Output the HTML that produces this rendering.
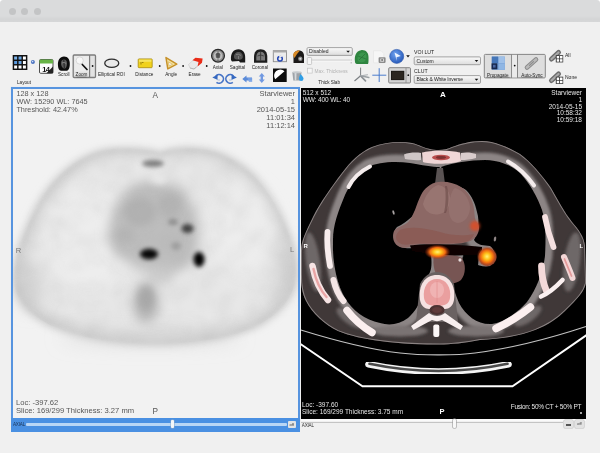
<!DOCTYPE html>
<html><head><meta charset="utf-8">
<style>
html,body{margin:0;padding:0;background:#fff;}
body{width:600px;height:453px;overflow:hidden;position:relative;font-family:"Liberation Sans",sans-serif;}
#win{position:absolute;left:0;top:0;width:600px;height:453px;background:#f0f0f0;border-radius:3.5px 3.5px 0 0;overflow:hidden;}
#title{position:absolute;left:0;top:0;width:600px;height:22px;background:linear-gradient(#dadbdc 0,#dadbdc 16px,#d4d5d6 19px,#d6d7d8 22px);}
.dot{position:absolute;top:8px;width:7.2px;height:7.2px;border-radius:50%;background:#c3c4c5;}
.abs{position:absolute;}
.lbl{position:absolute;font-size:5px;line-height:6px;color:#333;white-space:nowrap;transform:translateX(-50%);letter-spacing:-0.1px}
.ov{position:absolute;transform:translateZ(0);font-size:7.6px;line-height:8.15px;white-space:nowrap;letter-spacing:0}
#lv{position:absolute;left:11px;top:87px;width:285px;height:330px;border:2px solid #5794df;border-bottom:none;background:#efefef;overflow:hidden;box-shadow:0 0 1.5px .3px #a9cdf5}
#lbar{position:absolute;left:11px;top:418px;width:289px;height:13.5px;background:#4a90e2}
#rv{position:absolute;left:301px;top:88px;width:285px;height:330.5px;background:#000;overflow:hidden}
</style></head><body>
<div id="win">
<div id="title"><div class="dot" style="left:8.5px"></div><div class="dot" style="left:21px"></div><div class="dot" style="left:34px"></div></div>

<!--TOOLBAR-->
<svg id="tbs" class="abs" style="left:0;top:22px;transform:translateZ(0)" width="600" height="66" viewBox="0 22 600 66" font-family="Liberation Sans, sans-serif">
<defs>
<linearGradient id="cb" x1="0" y1="0" x2="0" y2="1"><stop offset="0" stop-color="#fafafa"/><stop offset="1" stop-color="#dcdcdc"/></linearGradient>
<radialGradient id="bl" cx=".4" cy=".35" r=".7"><stop offset="0" stop-color="#6ea0ee"/><stop offset="1" stop-color="#2457b8"/></radialGradient>
<filter id="t1" x="-20%" y="-20%" width="140%" height="140%"><feGaussianBlur stdDeviation="0.35"/></filter>
</defs>
<g font-size="4.65" fill="#1c1c1c" text-anchor="middle">

<!-- layout grid -->
<rect x="12.7" y="55" width="14.65" height="15" fill="#111"/>
<rect x="14.15" y="56.50" width="2.95" height="3.05" fill="#7db3ea"/><rect x="18.55" y="56.50" width="2.95" height="3.05" fill="#6aa5e3"/><rect x="22.95" y="56.50" width="2.95" height="3.05" fill="#fff"/><rect x="14.15" y="61.00" width="2.95" height="3.05" fill="#5b9be0"/><rect x="18.55" y="61.00" width="2.95" height="3.05" fill="#6aa5e3"/><rect x="22.95" y="61.00" width="2.95" height="3.05" fill="#fff"/><rect x="14.15" y="65.50" width="2.95" height="3.05" fill="#fff"/><rect x="18.55" y="65.50" width="2.95" height="3.05" fill="#fff"/><rect x="22.95" y="65.50" width="2.95" height="3.05" fill="#fff"/>
<text x="24" y="83.600">Layout</text>
<circle cx="32.900" cy="62" r="2" fill="#4a72c0"/><circle cx="32.600" cy="61.600" r=".8" fill="#cfe0fa"/>
<!-- calendar -->
<rect x="39.500" y="59.500" width="13.500" height="13.800" rx="1.200" fill="#fdfdfd" stroke="#3a3a3a" stroke-width=".9"/>
<path d="M39.500,63.500 L39.500,60.700 Q39.500,59.500 40.700,59.500 L51.800,59.500 Q53,59.500 53,60.700 L53,63.500 Z" fill="#67b346"/>
<path d="M46.500,73.300 L53,73.300 L53,66.500 Z" fill="#222"/>
<text x="45.800" y="71.600" font-size="7.500" font-weight="bold" fill="#111" letter-spacing="-.5">14</text>
<!-- scroll head -->
<path d="M58,66 C57.500,60 60,56.600 64,56.600 C68,56.600 70.200,60 69.800,65 C69.600,68 68.500,70.800 66.500,70.800 L61,70.800 C59,70.500 58.200,68.500 58,66 Z" fill="#0d0d0d"/>
<path d="M61,63 C61,60.500 62.500,59.500 64,59.500 C66,59.500 67.200,61 67,64 C66.800,66.500 66,68.500 64.500,68.500 C62.500,68.500 61,66 61,63 Z" fill="#5a5a5a"/>
<path d="M63.800,60 L64.300,68" stroke="#111" stroke-width=".8"/><path d="M62,63 Q64,61.500 66.200,63.500" stroke="#9a9a9a" stroke-width=".7" fill="none"/>
<text x="63.800" y="76.300">Scroll</text>
<!-- zoom button -->
<rect x="73.200" y="55" width="22.300" height="22.500" rx="1" fill="#e2e2e2" stroke="#7c7c7c" stroke-width="1.300"/>
<rect x="74.500" y="56.200" width="14.400" height="15.500" fill="#ececec"/>
<path d="M89.600,55 L89.600,77.500" stroke="#7c7c7c" stroke-width="1.200"/>
<circle cx="79.700" cy="60.500" r="3.600" fill="#f7f7f7" stroke="#d2d2d2" stroke-width=".8"/>
<path d="M82.300,64.500 L87,69.500" stroke="#111" stroke-width="1.700" stroke-linecap="round"/>
<text x="81.500" y="76.300">Zoom</text>
<path d="M76.500,77 L86.500,77" stroke="#444" stroke-width=".4"/>
<circle cx="92.600" cy="66" r=".9" fill="#111"/>
<!-- ellipse -->
<ellipse cx="111.750" cy="63.250" rx="7" ry="4.200" fill="#e9e9e9" stroke="#2d2d2d" stroke-width="1.300"/>
<text x="111.400" y="76.300">Elliptical ROI</text>
<circle cx="130.500" cy="66" r=".9" fill="#111"/>
<!-- distance -->
<rect x="138.200" y="58.900" width="14" height="8.800" rx=".8" fill="#f1d21c" stroke="#a88a10" stroke-width=".8"/>
<rect x="139" y="59.600" width="12.400" height="2.200" fill="#f8e873" opacity=".8"/>
<path d="M141,62 L141,64.500 M142,62.500 L143.500,62.500" stroke="#7a6408" stroke-width=".7"/>
<text x="144.300" y="76.300">Distance</text>
<circle cx="159.700" cy="66" r=".9" fill="#111"/>
<!-- angle -->
<path d="M166,57.600 L176.800,64.200 L167.800,68.900 Z" fill="#f3e3a0" stroke="#c6912a" stroke-width="1.500" stroke-linejoin="round"/>
<path d="M168.300,61.800 L172.500,64.300 L169,66.100 Z" fill="#f0f0f0" stroke="#d8ab40" stroke-width=".6"/>
<text x="171.200" y="76.300">Angle</text>
<circle cx="183.100" cy="66" r=".9" fill="#111"/>
<!-- erase -->
<path d="M188.500,64.500 L195,58.500 L202,59.500 L201,63.500 L194,69 L190,68 Z" fill="#e9e9e9" stroke="#c4c4c4" stroke-width=".5"/>
<path d="M192.500,60.300 L195.500,57.800 L202.600,58.400 L202,62.800 L197.500,66.500 L198.500,62 Z" fill="#ea2c18"/>
<path d="M190,68 L194,69 L196.500,67" fill="none" stroke="#999" stroke-width=".6"/>
<text x="194.600" y="76.300">Erase</text>
<circle cx="206.700" cy="66" r=".9" fill="#111"/>
<!-- axial -->
<circle cx="218" cy="55.700" r="6.400" fill="#8f8f8f" stroke="#2a2a2a" stroke-width="1.300"/>
<circle cx="218" cy="55.700" r="4.300" fill="#bdbdbd"/>
<path d="M218,50.500 L218,61 M216,54 Q218,52 220,54 L219.500,57.500 L216.500,57.500 Z" fill="#555" stroke="#444" stroke-width=".6"/>
<text x="217.800" y="68.900">Axial</text>
<!-- sagittal -->
<path d="M231,60 C230.500,53 233.500,49.300 238.500,49.300 C243,49.300 245.500,53 245.200,58 L245.200,62.500 L240,62.500 L239,61 L232,61.500 Z" fill="#1a1a1a"/>
<path d="M234,57 C234,53.500 236,52 238.500,52 C241,52 243,54 242.800,57 C242.500,59.500 240.500,60 238,59.500 C235.500,59.500 234,59 234,57 Z" fill="#555"/>
<path d="M236,54.500 Q238.500,53.500 241,55.500 M238.500,56 L238.500,59" stroke="#999" stroke-width=".6" fill="none"/>
<text x="237.500" y="68.900">Sagittal</text>
<!-- coronal -->
<path d="M254,62.700 L254,57 C254,52 256.500,49.300 260.600,49.300 C264.700,49.300 267.300,52 267.300,57 L267.300,62.700 Z" fill="#1e1e1e"/>
<path d="M256.300,60.500 L256.300,57 C256.300,53.500 258,51.800 260.600,51.800 C263.200,51.800 265,53.500 265,57 L265,60.500 Z" fill="#7a7a7a"/>
<path d="M260.600,51.800 L260.600,60.500 M257.500,56 Q260.600,54 263.800,56" stroke="#2a2a2a" stroke-width=".7" fill="none"/>
<text x="259.900" y="68.900">Coronal</text>
<!-- rotate ccw -->
<g fill="none" stroke="#4573c6" stroke-width="1.700">
<path d="M215.800,76.200 A4.300,4.300 0 1 1 216.500,82.300"/>
<path d="M236,76.200 A4.300,4.300 0 1 0 235.300,82.300" transform="translate(-2.500,0)"/>
</g>
<path d="M212.300,77.500 L217.800,74.500 L217.300,79.800 Z" fill="#3568c0"/>
<path d="M236.900,77.500 L231.400,74.500 L231.900,79.800 Z" fill="#3568c0"/>
<path d="M217.500,77 L217.500,80 L220,80" stroke="#7d9ad0" stroke-width=".6" fill="none"/>
<path d="M231.500,77 L231.500,80 L229,80" stroke="#7d9ad0" stroke-width=".6" fill="none"/>
<!-- flip h -->
<path d="M242.300,79 L246.500,75.500 L246.500,77.400 L252,77.400 L252,80.600 L246.500,80.600 L246.500,82.500 Z" fill="#4a7fd6" opacity=".9"/>
<path d="M247.500,78 L252.200,78 L252.200,82 L249,82 Z" fill="#7aa4e6" opacity=".8"/>
<!-- flip v -->
<path d="M261.800,73 L264.800,76.500 L263,76.500 L263,79.500 L264.800,79.500 L261.800,83 L258.800,79.500 L260.600,79.500 L260.600,76.500 L258.800,76.500 Z" fill="#5a8ade" opacity=".85"/>
<!-- screenshot -->
<rect x="273.300" y="50.700" width="13.200" height="11" fill="#ececec" stroke="#8c8c8c" stroke-width=".9"/>
<rect x="273.300" y="50.700" width="13.200" height="1.800" fill="#a9a9a9"/>
<circle cx="280" cy="58.800" r="2.300" fill="none" stroke="#2446b4" stroke-width="1.500"/>
<path d="M279,55 L282.500,56.500 L279.500,58 Z" fill="#ececec"/>
<!-- invert -->
<rect x="273" y="68.500" width="13.700" height="13.500" fill="#0c0c0c"/>
<path d="M275.200,79.300 A6.200,6.200 0 0 1 284.500,71.200 Z" fill="#fff"/>
<!-- person -->
<path d="M293.500,63 L293.500,56 C293.500,52 296,50.400 299,50.400 C302,50.400 304,52.500 304,56 L304,63 Z" fill="#1c1a19"/>
<path d="M293,55 C293.500,51.500 297,50 300,50.600 L297,54 L294.500,58 Z" fill="#d98a25"/>
<circle cx="300.300" cy="58.800" r="2.200" fill="#8a8a8a"/><circle cx="300.300" cy="58.800" r="1" fill="#ddd"/>
<!-- bucket -->
<path d="M292.300,72.300 L301.500,72.300 L300.500,80.500 L293.300,80.500 Z" fill="#9ea3a8"/>
<path d="M294.500,72.300 L296.500,72.300 L296.300,80.500 L294.800,80.500 Z" fill="#d6d9dc"/>
<ellipse cx="296.900" cy="72.300" rx="4.600" ry="1" fill="#c6cacd"/>
<path d="M300.500,74 C302.500,76 303.500,77.500 303.500,78.800 A2.300,2.300 0 0 1 298.900,78.800 C298.900,77.500 299.500,76 300.500,74 Z" fill="#2f9ee6"/>
<!-- Disabled combo -->
<rect x="307" y="47.600" width="45.300" height="7.800" rx="1.200" fill="url(#cb)" stroke="#8f8f8f" stroke-width=".8"/>
<text x="309" y="53.300" text-anchor="start" font-size="5" fill="#222">Disabled</text>
<path d="M346.300,50.700 L349.900,50.700 L348.100,52.800 Z" fill="#111"/>
<!-- slider -->
<path d="M311,60.200 L350,60.200" stroke="#cfcfcf" stroke-width="1.200"/>
<path d="M311,61.200 L350,61.200" stroke="#fafafa" stroke-width=".8"/>
<rect x="307.300" y="57.500" width="4.300" height="7" rx=".8" fill="#f6f6f6" stroke="#b9b9b9" stroke-width=".7"/>
<path d="M351.200,59.500 L351.200,60.500 M351.200,62 L351.200,63.500" stroke="#999" stroke-width=".7"/>
<!-- checkbox -->
<rect x="307.400" y="68.200" width="4.800" height="4.900" fill="#f7f7f7" stroke="#c3c3c3" stroke-width=".7"/>
<text x="314.500" y="72.500" text-anchor="start" font-size="4.800" fill="#b3b3b3">Max. Thickness</text>
<text x="329.200" y="83.800">Thick Slab</text>
<!-- green head -->
<path d="M355,62 C354,56 356,51 361,50.200 C365.500,49.600 368.500,52.500 368.500,57 C368.500,60 368.700,62.500 368,64 L357,64 C355.500,63.800 355.200,63 355,62 Z" fill="#2f8540"/>
<path d="M357.500,58 C358,54.500 360,52.500 363,52.500 C365.500,52.500 366.800,55 366.500,58 C366,61 364,62.500 361,62.300 C358.500,62 357.300,60.500 357.500,58 Z" fill="#3f9a50" opacity=".8"/>
<path d="M358,56 L366,59 M359,60 L365,54" stroke="#246a32" stroke-width=".6"/>
<!-- camera doc -->
<path d="M373.500,50.700 L381,50.700 L383.800,53.500 L383.800,62.800 L373.500,62.800 Z" fill="#f6f6f6" stroke="#e0e0e0" stroke-width=".5"/>
<rect x="378.600" y="57.200" width="7" height="5.700" rx=".8" fill="#8c8c8c"/>
<rect x="380.200" y="58.400" width="3.800" height="3.400" rx=".5" fill="#d9d9d9"/><circle cx="382.100" cy="60.100" r="1" fill="#777"/>
<!-- blue circle -->
<circle cx="396.700" cy="56.400" r="7" fill="url(#bl)" stroke="#2a55aa" stroke-width=".6"/>
<path d="M394.500,52.500 L400.800,56 L396.500,57.200 L396.800,61 Z" fill="#f0f5ff"/>
<path d="M406.200,55.200 L409.800,55.200 L408,57.500 Z" fill="#111"/>
<!-- axes -->
<g stroke="#7c8084" stroke-linecap="round" fill="none">
<path d="M360.600,68 L360.600,75.800" stroke-width="1"/>
<path d="M360.600,75.800 L354.800,80.700" stroke-width="1.200"/>
<path d="M360.600,75.800 L368.800,77.500" stroke-width="1.500" stroke="#9aa0a4"/>
<path d="M360.600,75.800 L365.500,80.800" stroke-width="1.700" stroke="#8d9296"/>
<path d="M360.600,75.800 L367.500,74.800" stroke-width="1" stroke="#a5aaae"/>
</g>
<!-- crosshair -->
<path d="M379.200,68.200 L379.200,82 M372.300,75.200 L386.300,75.200" stroke="#3a6fc9" stroke-width=".9"/>
<!-- monitor -->
<rect x="388.700" y="67.700" width="21.800" height="15.300" rx="1" fill="#d4d4d4" stroke="#7a7a7a" stroke-width=".9"/>
<rect x="391" y="70.800" width="13.300" height="9.300" fill="#1a1815"/>
<rect x="391.800" y="71.600" width="11.700" height="7.700" fill="#2b2620"/>
<path d="M406,67.700 L406,83" stroke="#8a8a8a" stroke-width=".8"/>
<circle cx="408.300" cy="75.200" r=".9" fill="#111"/>
<!-- VOI LUT -->
<text x="414" y="53.600" text-anchor="start" font-size="5.200" fill="#222">VOI LUT</text>
<rect x="414.200" y="56.900" width="66.300" height="7.800" rx="1.200" fill="url(#cb)" stroke="#8f8f8f" stroke-width=".8"/>
<text x="416.500" y="62.600" text-anchor="start" font-size="5" fill="#222">Custom</text>
<path d="M474.700,60 L478.300,60 L476.500,62.100 Z" fill="#111"/>
<text x="414" y="72.600" text-anchor="start" font-size="5.200" fill="#222">CLUT</text>
<rect x="414.200" y="75.600" width="66.300" height="7.800" rx="1.200" fill="url(#cb)" stroke="#8f8f8f" stroke-width=".8"/>
<text x="416.500" y="81.300" text-anchor="start" font-size="5" fill="#222" letter-spacing="-.12">Black &amp; White Inverse</text>
<path d="M474.700,78.700 L478.300,78.700 L476.500,80.800 Z" fill="#111"/>
<!-- propagate -->
<rect x="484.300" y="54.400" width="61" height="23.500" rx="1" fill="#dedede" stroke="#868686" stroke-width="1"/>
<path d="M511.600,54.400 L511.600,77.900 M517.500,54.400 L517.500,77.900" stroke="#868686" stroke-width="1"/>
<rect x="512.100" y="54.900" width="4.900" height="22.500" fill="#ebebeb"/>
<rect x="491.800" y="56.600" width="13" height="13.200" fill="#6b96cc"/>
<rect x="491.800" y="56.600" width="6.300" height="6.400" fill="#4576b8"/><rect x="498.500" y="63.300" width="6.300" height="6.500" fill="#8fb6e4"/>
<rect x="498.500" y="56.600" width="6.300" height="6.400" fill="#9fc0e8"/>
<rect x="491.500" y="63.300" width="5.800" height="6" fill="#16284e"/><rect x="493" y="64.800" width="2.600" height="2.800" fill="#4a66a0"/>
<text x="497.800" y="76.900">Propagate</text>
<path d="M486.500,77.300 L509.500,77.300" stroke="#444" stroke-width=".4"/>
<circle cx="514.700" cy="65.600" r=".9" fill="#111"/>
<!-- auto-sync -->
<g stroke-linecap="round" fill="none">
<path d="M527,67.500 L536,59.500" stroke="#8a8a8a" stroke-width="4.600"/>
<path d="M527,67.500 L536,59.500" stroke="#b9b9b9" stroke-width="2.600"/>
<path d="M529.500,65.300 L533.500,61.700" stroke="#8a8a8a" stroke-width="1.100"/>
</g>
<text x="532" y="76.900">Auto-Sync</text>
<path d="M521.500,77.300 L542.500,77.300" stroke="#444" stroke-width=".4"/>
<!-- all -->
<g id="chain">
<path d="M551.500,59 L558.500,52.500" stroke="#6c6c6c" stroke-width="5" stroke-linecap="round" fill="none"/>
<path d="M551.500,59 L558.500,52.500" stroke="#a9a9a9" stroke-width="2.200" stroke-linecap="round" fill="none"/>
<rect x="555.800" y="55.200" width="7.400" height="7.200" fill="#333"/>
<rect x="556.700" y="56" width="2.500" height="2.500" fill="#fff"/><rect x="560" y="56" width="2.500" height="2.500" fill="#fff"/>
<rect x="556.700" y="59.200" width="2.500" height="2.500" fill="#fff"/><rect x="560" y="59.200" width="2.500" height="2.500" fill="#fff"/>
</g>
<text x="565" y="57.200" text-anchor="start" font-size="5">All</text>
<use href="#chain" y="21.500"/>
<text x="565" y="78.800" text-anchor="start" font-size="5">None</text>

</g>
</svg>

<!--LEFT VIEWER-->
<div id="lv">
<svg class="abs" style="left:0;top:0" width="285" height="330" viewBox="13 89 285 330">
<defs>
<filter id="b2" x="-50%" y="-50%" width="200%" height="200%"><feGaussianBlur stdDeviation="2.2"/></filter>
<filter id="b3" x="-50%" y="-50%" width="200%" height="200%"><feGaussianBlur stdDeviation="3.5"/></filter>
<filter id="b5" x="-50%" y="-50%" width="200%" height="200%"><feGaussianBlur stdDeviation="6"/></filter>
<filter id="b8" x="-50%" y="-50%" width="200%" height="200%"><feGaussianBlur stdDeviation="9"/></filter>
<filter id="nz" x="0" y="0" width="100%" height="100%"><feTurbulence type="fractalNoise" baseFrequency="0.06" numOctaves="2" seed="7" result="t"/><feColorMatrix in="t" type="matrix" values="0 0 0 0 0.4  0 0 0 0 0.4  0 0 0 0 0.4  1.5 0 0 0 -0.6"/><feGaussianBlur stdDeviation="1.5"/></filter>
<clipPath id="petclip"><path d="M160,153 C150,149 125,147 105,150 C75,156 50,180 37,207 C24,232 14,255 14,278 C14,299 27,313 52,326 C85,340 120,344 155,344 C195,344 235,338 260,324 C283,311 296,294 296,272 C296,248 286,221 270,196 C256,174 234,156 208,150 C190,147 172,148 160,153 Z"/></clipPath>
<filter id="b1" x="-50%" y="-50%" width="200%" height="200%"><feGaussianBlur stdDeviation="1.2"/></filter>
</defs>
<rect x="0" y="80" width="310" height="350" fill="#f2f2f2"/>
<!-- body -->
<g filter="url(#b3)">
<path id="petbody" d="M160,151 C150,147 125,145 105,148 C75,154 50,178 35,205 C22,230 12,255 12,278 C12,300 25,315 50,328 C85,342 120,346 155,346 C195,346 235,340 262,326 C285,312 298,295 298,272 C298,248 288,220 272,195 C258,172 235,154 208,148 C190,145 172,146 160,151 Z" fill="#d3d3d3"/>
</g>
<g filter="url(#b5)">
<path d="M160,160 C150,156 125,155 108,158 C80,164 60,184 46,210 C34,232 26,255 26,275 C26,294 36,306 58,317 C90,330 122,334 155,334 C192,334 228,329 252,316 C273,304 284,290 284,270 C284,248 276,224 262,201 C249,180 230,164 205,158 C190,155 172,156 160,160 Z" fill="#e7e7e7"/>
</g>
<g filter="url(#b2)"><path d="M160,155 C150,151 125,149 106,152 C77,158 53,181 39,208 C26,232 17,256 17,278 C17,298 29,311 53,324 C86,338 120,342 155,342 C195,342 234,336 259,322 C281,309 294,293 294,272 C294,248 284,222 268,197 C254,175 233,158 207,152 C190,149 172,150 160,155 Z" fill="none" stroke="#c9c9c9" stroke-width="3.500" opacity=".55"/></g>
<!-- lungs lighter -->
<g filter="url(#b8)">
<ellipse cx="88" cy="238" rx="42" ry="52" fill="#eeeeee" opacity=".85"/>
<ellipse cx="243" cy="232" rx="30" ry="48" fill="#eeeeee" opacity=".85"/>
<ellipse cx="30" cy="285" rx="10" ry="25" fill="#c8c8c8" opacity=".7"/>
<ellipse cx="283" cy="270" rx="9" ry="28" fill="#cccccc" opacity=".7"/>
<ellipse cx="150" cy="338" rx="90" ry="7" fill="#d0d0d0" opacity=".6"/>
</g>
<!-- mediastinum -->
<g filter="url(#b5)">
<path d="M132,186 C150,176 180,180 189,198 C197,215 201,235 197,255 C190,270 172,276 152,270 C130,266 108,255 108,238 C108,215 118,196 132,186Z" fill="#bdbdbd"/>
<ellipse cx="146" cy="303" rx="13" ry="20" fill="#b6b6b6"/>
<ellipse cx="160" cy="275" rx="14" ry="10" fill="#cdcdcd"/>
</g>
<g filter="url(#b3)">
<ellipse cx="140" cy="212" rx="16" ry="14" fill="#a8a8a8" opacity=".55"/>
<ellipse cx="170" cy="205" rx="12" ry="12" fill="#acacac" opacity=".5"/>
<ellipse cx="125" cy="235" rx="10" ry="8" fill="#b0b0b0" opacity=".5"/>
<ellipse cx="146" cy="298" rx="8" ry="12" fill="#a2a2a2" opacity=".7"/>
<ellipse cx="159" cy="179" rx="8" ry="5" fill="#f4f4f4" opacity=".95"/>
</g>
<g filter="url(#b2)">
<ellipse cx="153" cy="163.500" rx="11" ry="3.500" fill="#7e7e7e"/>
<ellipse cx="149" cy="254" rx="9" ry="5.200" fill="#000"/>
<ellipse cx="199" cy="259.500" rx="5.500" ry="7.500" fill="#050505"/>
<ellipse cx="187.500" cy="228.500" rx="6" ry="4.500" fill="#3c3c3c"/>
<ellipse cx="173" cy="222" rx="5" ry="3" fill="#8a8a8a"/>
<ellipse cx="176" cy="246" rx="5" ry="4" fill="#909090" opacity=".7"/>
</g>
<g clip-path="url(#petclip)" opacity=".22" filter="url(#b2)"><rect x="13" y="140" width="285" height="210" filter="url(#nz)"/></g>
</svg>
</div>
<div id="lbar"></div>

<!--RIGHT VIEWER-->
<div id="rv">
<svg class="abs" style="left:0;top:0" width="285" height="330.5" viewBox="301 88 285 330.5">
<defs>
<filter id="c1" x="-20%" y="-20%" width="140%" height="140%"><feGaussianBlur stdDeviation="0.7"/></filter>
<filter id="c2" x="-50%" y="-50%" width="200%" height="200%"><feGaussianBlur stdDeviation="1.6"/></filter>
<filter id="c3" x="-50%" y="-50%" width="200%" height="200%"><feGaussianBlur stdDeviation="3"/></filter>
<radialGradient id="hot"><stop offset="0" stop-color="#fff27a"/><stop offset=".3" stop-color="#ffc21a"/><stop offset=".6" stop-color="#f06a10"/><stop offset="1" stop-color="#a02a10" stop-opacity="0"/></radialGradient>
</defs>
<rect x="300" y="80" width="300" height="345" fill="#000"/>
<!-- body wall -->
<defs>
<path id="outer" d="M301,252 C301,240 306,232 313,217 C320,203 332,186 342,173 C350,162 360,152 372,147 C385,142 400,141 412,143 C420,145 424,148 430,149 C436,150.5 446,150.5 452,147 C460,144 470,141 482,141 C494,141 508,147 520,154 C530,161 542,175 551,188 C558,200 564,212 572,222 C578,229 584,236 585,246 L586,283 C584,292 578,298 565,311 C558,318 548,325 535,330 C520,336 500,339 480,340 C465,343 450,344.5 440,344.5 C425,344.5 400,344 380,341 C365,339 350,336 338,331 C325,325 312,313 306,301 C302,293 301,285 301,275 Z"/>
<path id="lungL" d="M333,240 C333,225 338,212 345,195 C350,184 358,173 368,167 C378,162 395,161 410,163 C422,165 432,167 440,167 C436,172 437,180 436,184 C428,187 424,193 421,203 C417,213 408,222 397,227 C392,232 393,241 400,247 C410,250 420,246 430,250 C432,258 432,268 430,272 C426,280 424,287 422,294 C420,303 416,311 408,318 C400,324 390,326 380,323 C365,320 352,310 345,298 C338,286 332,265 333,240 Z"/>
<path id="lungR" d="M441,167 C452,163 470,160 485,160 C498,160 512,165 521,174 C530,184 538,198 542,210 C546,222 546,240 545,256 C543,272 537,288 527,302 C518,312 505,322 492,324 C478,325 466,316 459,303 C455,294 452,284 451,274 C458,268 462,262 463,256 C470,262 480,268 490,266 C496,260 496,250 490,246 C484,245 478,246 474,240 C478,232 480,222 477,212 C475,203 472,196 466,190 C460,186 452,184 444,184 C445,178 445,172 441,167 Z"/>
<clipPath id="bodyclip"><use href="#outer"/></clipPath>
</defs>
<g filter="url(#c1)">
<use href="#outer" fill="#3f3838"/>
<g clip-path="url(#bodyclip)">
<g filter="url(#c2)" fill="none" stroke="#8c8585" stroke-width="15" stroke-linejoin="round">
<use href="#lungL"/><use href="#lungR"/>
</g>
<g filter="url(#c2)">
<ellipse cx="313" cy="262" rx="7" ry="30" fill="#6e6767" transform="rotate(-8 313 262)"/>
<ellipse cx="572" cy="262" rx="8" ry="30" fill="#6e6767" transform="rotate(8 572 262)"/>
<ellipse cx="400" cy="331" rx="28" ry="5.500" fill="#7a7373"/>
<ellipse cx="476" cy="331" rx="28" ry="5.500" fill="#7a7373"/>
<ellipse cx="350" cy="318" rx="16" ry="6" fill="#6e6767" transform="rotate(35 350 318)"/>
<ellipse cx="528" cy="316" rx="16" ry="6" fill="#6e6767" transform="rotate(-35 528 316)"/>
</g>
<use href="#outer" fill="none" stroke="#8a8282" stroke-width="1.800"/>
</g>
<use href="#lungL" fill="#000"/><use href="#lungR" fill="#000"/>
<path d="M436,168 L446,168 L445,186 L436,186 Z" fill="#000"/>
</g>
<!-- heart -->
<g filter="url(#c1)">
<path d="M437,168 L443,168 L445,184 L435,184 Z" fill="#5a5252"/>
<path fill="#8c6865" d="M438.5,182 C446,181 455,183 461,187 C467,191 471,197 473,204 C475,211 474,217 476,221 C479,224 480,228 478,233 C476,238 472,241 467,242 C460,244 452,244 445,244.5 C435,245 424,244 415,245 C410,248 402,249 398,246 C393,243 392,236 394,231 C397,227 403,226 407,223 C411,220 413,214 415,210 C417,204 419,199 421,195 C424,189 430,183 438.5,182 Z"/>
<path fill="#9b7874" opacity=".8" d="M438,185 C430,188 425,196 423,204 C425,212 432,216 440,214 C447,212 451,205 450,197 C449,190 444,186 438,185Z"/>
<path fill="#967370" opacity=".8" d="M455,188 C463,190 469,198 470,207 C470,216 465,223 457,223 C451,222 448,215 449,206 C450,198 451,191 455,188Z"/>
<path fill="#8a5750" opacity=".7" d="M400,230 C410,226 425,228 440,232 C452,236 465,236 474,234 C472,241 465,243 455,243 C440,244 420,243 410,244 C403,246 397,243 396,238 C396,234 398,232 400,230Z"/>
<path fill="#6a4a48" opacity=".6" d="M447,186 C449,195 449,205 446,213 L444,213 C446,204 446,195 445,186Z"/>
<path fill="#775553" d="M434,255 C440,253 455,254 462,258 C466,264 466,274 461,280 C455,285 446,284 441,280 C435,276 432,265 434,255Z"/>
<ellipse cx="460" cy="260" rx="1.6" ry="1.8" fill="#e8dede"/>
<ellipse cx="393.5" cy="212.5" rx="1" ry="2.4" fill="#a9a3a3" transform="rotate(-15 393.5 212.5)"/>
<ellipse cx="495" cy="239" rx="1.2" ry="2.6" fill="#8f8585" transform="rotate(10 495 239)"/>
</g>
<!-- bronchus gap -->
<path d="M463,254 L479,254 L478,266 C472,270 466,266 464,262 Z" fill="#050202" filter="url(#c1)"/>
<path d="M410,245.5 C425,243.5 450,244 482,247 L482,254 C460,257 430,255 412,251 Z" fill="#0a0404" filter="url(#c1)"/>
<!-- vertebra -->
<g filter="url(#c1)">
<path d="M420,284 C424,276 430,272 437,272 C444,272 450,276 454,284 L458,322 L416,322 Z" fill="#6a6262"/>
<path d="M411,326 L429,313 C434,317 440,317 445,313 L463,326 L460.500,330 L442,320 C439,321.500 435,321.500 432,320 L413.500,330 Z" fill="#f8efef"/>
<path d="M420,300 C418,285 425,275 437,275 C449,275 456,285 454,300 C453,306 449,309 445,309 L429,309 C425,309 421,306 420,300 Z" fill="#f6e2e2"/>
<path d="M424,298 C422.500,287 428,279 437,279 C446,279 451.500,287 450,298 C449,304 445,306 437,306 C429,306 425,304 424,298 Z" fill="#ea9f9f"/>
<ellipse cx="437" cy="290" rx="7" ry="8" fill="#f2bcbc" opacity=".7"/>
<path d="M437,281 L437,303" stroke="#e08a8a" stroke-width="1" opacity=".6"/>
<ellipse cx="437" cy="310" rx="7.500" ry="5" fill="#4c3030"/>
<ellipse cx="437" cy="310" rx="5" ry="3" fill="#5e3a3a"/>
<rect x="433.300" y="324.500" width="6" height="12.500" rx="2" fill="#fcf7f7"/>
</g>
<!-- sternum -->
<g filter="url(#c1)">
<path d="M404,154.5 C409,152.5 416,152 421,153 L421,160 C416,160.5 410,160 405,159 Z" fill="#cfc6c6"/>
<path d="M422,152.5 C430,150 452,150 460,152.5 L461,161 C452,164.5 430,164.5 423,162 Z" fill="#efd6d6"/>
<ellipse cx="441" cy="157.5" rx="9" ry="2.8" fill="#b94e4e"/>
<ellipse cx="441" cy="157.5" rx="5" ry="1.4" fill="#7a3030"/>
<path d="M461,153 C466,152 472,152.5 476,154 L476,158 C471,159.5 466,160 461,160 Z" fill="#d9cdcd"/>
</g>
<!-- ribs -->
<g filter="url(#c1)" fill="none" stroke-linecap="round">
<path d="M348.5,187 C353,178 361,171 370,166.5" stroke="#f4ecec" stroke-width="4"/>
<path d="M327.5,232 C326.5,245 328,255 330,266" stroke="#f8eded" stroke-width="5.800"/>
<path d="M312.5,266 C315,280 321,292 328,300" stroke="#f6e4e4" stroke-width="6.500"/>
<path d="M313.5,269 C316,281 321,291 326.5,297" stroke="#e9a5a5" stroke-width="2.4"/>
<path d="M333.5,280 C335.5,289 339,296 343.5,301" stroke="#f5e6e6" stroke-width="6"/>
<path d="M347,310.5 C354,319.5 363,327 372,332.5" stroke="#fbefef" stroke-width="7.500"/>
<path d="M508,161.5 C518,167 527,175.5 534,185.500" stroke="#f4ecec" stroke-width="4"/>
<path d="M545,217 C547,228 550,238 553.5,247" stroke="#f5e0e0" stroke-width="5.800"/>
<path d="M541.5,266 C541.5,276 543.5,284 546.5,291" stroke="#f4dada" stroke-width="6.800"/>
<path d="M564,257 C567,264 570,271 572.5,278" stroke="#f3d6d6" stroke-width="6"/>
<path d="M564.5,259 C567,265 569.5,271 571.5,276" stroke="#e39a9a" stroke-width="1.8"/>
<path d="M541,296.500 C549,293 556,287 562.5,280" stroke="#faf0f0" stroke-width="4.600"/>
<path d="M496,328.5 C508,323 520,315.500 530.5,307" stroke="#fbefef" stroke-width="7.500"/>
</g>
<circle cx="487.5" cy="257" r="9" fill="#8a4a3c" filter="url(#c1)"/>
<!-- hot spots -->
<ellipse cx="437.5" cy="252" rx="13" ry="7.5" fill="url(#hot)"/>
<circle cx="487" cy="256.5" r="10.5" fill="url(#hot)"/>
<circle cx="475" cy="226" r="5" fill="#e8481a" opacity=".75" filter="url(#c2)"/>
<!-- table -->
<path d="M300,329.700 C330,339 365,349 400,353 C420,355.300 455,355.800 475,353 C510,348.500 545,340 586,326.500" fill="none" stroke="#c2c2c2" stroke-width="1.100" filter="url(#c1)"/>
<path d="M299,343.100 L362.500,386.250 L512.500,386.250 L587,334.800" fill="none" stroke="#fff" stroke-width="1.900" stroke-linejoin="miter"/>
<g filter="url(#c1)">
<path d="M368.500,364.300 Q438.500,379 508.500,364.300" fill="none" stroke="#f4f4f4" stroke-width="6.600" stroke-linecap="round"/>
<path d="M369.500,363.800 Q438.500,378.300 507.500,363.800" fill="none" stroke="#4a4a4a" stroke-width="2.600" stroke-linecap="round"/>
</g>
</svg>
</div>



<!--SLIDERS-->
<div class="abs" style="left:26px;top:423.2px;width:261px;height:2.4px;background:#b9d6f5;border-radius:1px"></div>
<div class="abs" style="left:13px;top:421.5px;font-size:4.6px;line-height:6px;color:#1d3557;letter-spacing:-.2px">AXIAL</div>
<div class="abs" style="left:171px;top:420px;width:3.4px;height:8px;background:#f4f6f8;border-radius:1px;box-shadow:0 0 0 .5px #8aa7c9"></div>
<div class="abs" style="left:288px;top:420.7px;width:7.500px;height:7.3px;background:#e4e4e4;border-radius:1px;font-size:4px;line-height:7px;text-align:center;color:#333">off</div>
<div class="abs" style="left:301px;top:418.5px;width:285px;height:2.5px;background:#fafafa"></div>
<div class="abs" style="left:301px;top:421.6px;width:262px;height:1.4px;background:#c4c4c4"></div>
<div class="abs" style="left:301.8px;top:422.800px;font-size:4.6px;line-height:6px;color:#333;letter-spacing:-.2px">AXIAL</div>
<div class="abs" style="left:453px;top:419px;width:3.4px;height:9px;background:#f8f8f8;border-radius:1px;box-shadow:0 0 0 .6px #999"></div>
<div class="abs" style="left:563.5px;top:420px;width:9.5px;height:8px;background:#e2e2e2;border-radius:1px;box-shadow:0 0 0 .5px #bbb"><div class="abs" style="left:2px;top:4px;width:5.5px;height:2px;background:#555"></div></div>
<div class="abs" style="left:574.7px;top:420px;width:9.5px;height:8px;background:#e2e2e2;border-radius:1px;box-shadow:0 0 0 .5px #bbb;font-size:4px;line-height:8px;text-align:center;color:#333">off</div>
<!--OVERLAYS-->
<div id="ovl" style="color:#565656">
<div class="ov" id="t1" style="left:16.4px;top:89.5px;font-size:7.3px">128 x 128<br>WW: 15290 WL: 7645<br>Threshold: 42.47%</div>
<div class="ov" id="t4" style="left:152.4px;top:91.6px;font-size:8.2px">A</div>
<div class="ov" style="right:305px;top:89.5px;text-align:right;font-size:7.5px">Starviewer<br>1<br>2014-05-15<br>11:01:34<br>11:12:14</div>
<div class="ov" style="left:15.8px;top:247.3px;font-size:7.6px;color:#777">R</div>
<div class="ov" style="right:305.700px;top:246px;font-size:7.6px;color:#777">L</div>
<div class="ov" id="t5" style="left:16px;top:399.2px">Loc: -397.62<br>Slice: 169/299 Thickness: 3.27 mm</div>
<div class="ov" style="left:152.6px;top:408.200px;font-size:8.2px">P</div>
</div>
<div id="ovr" style="color:#e6e6e6">
<div class="ov" id="u1" style="left:302.7px;top:90.2px;font-size:6.5px;line-height:6.7px">512 x 512<br><span style="letter-spacing:-.12px">WW: 400 WL: 40</span></div>
<div class="ov" style="left:440px;top:91px;font-weight:bold;color:#fff;font-size:8px">A</div>
<div class="ov" style="right:18px;top:90px;text-align:right;font-size:6.5px;line-height:6.8px">Starviewer<br>1<br>2014-05-15<br>10:58:32<br>10:59:18</div>
<div class="ov" style="left:303.5px;top:241.500px;font-size:6px;font-weight:bold;color:#fff">R</div>
<div class="ov" style="left:579.5px;top:241.500px;font-size:6px;font-weight:bold;color:#fff">L</div>
<div class="ov" id="u5" style="left:302px;top:402.300px;font-size:6.5px;line-height:6.7px">Loc: -397.60<br>Slice: 169/299 Thickness: 3.75 mm</div>
<div class="ov" style="left:439.500px;top:408px;font-size:7.5px;font-weight:bold;color:#fff">P</div>
<div class="ov" id="u7" style="right:18.7px;top:403px;font-size:6.5px;letter-spacing:-.28px">Fusion: 50% CT + 50% PT</div>
<div class="abs" style="left:579.5px;top:412.400px;width:2px;height:2px;border-radius:50%;background:#ddd"></div>
</div>
</div>
</body></html>
